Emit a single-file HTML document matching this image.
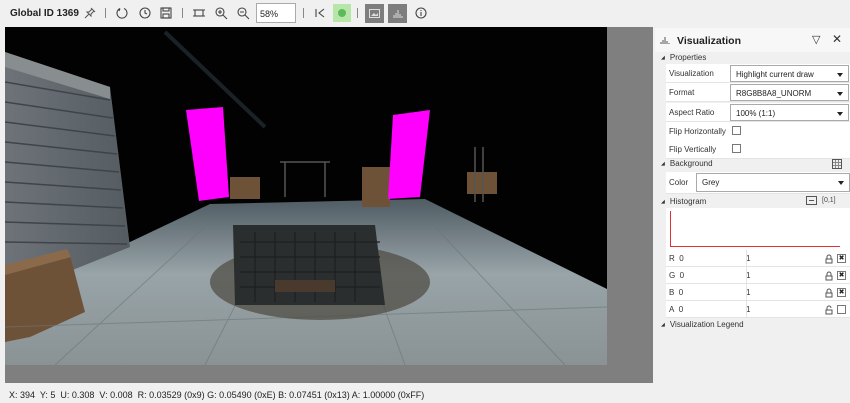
<!DOCTYPE html>
<html><head><style>
*{margin:0;padding:0;box-sizing:border-box}
body{width:850px;height:403px;background:#f0f0f0;font-family:"Liberation Sans",sans-serif;font-size:9px;color:#222;position:relative;overflow:hidden}
.abs{position:absolute}
.tb{top:0;left:0;width:850px;height:26px;background:#f0f0f0}
.ic{position:absolute;top:6px}
.sep{position:absolute;top:8px;width:1px;height:10px;background:#888}
.panel{left:655px;top:28px;width:195px;height:352px;background:#f0f0f0}
.row{position:absolute;left:11px;width:184px;height:19px;background:#fff;border-bottom:1px solid #e4e4e4}
.lbl{position:absolute;left:3px;top:5px;font-size:8px;color:#333}
.sel{position:absolute;border:1px solid #aaa;background:#fff;height:17px;top:1px;font-size:8px;padding:4px 0 0 5px}
.sel:after{content:"";position:absolute;right:5px;top:7px;border-left:3px solid transparent;border-right:3px solid transparent;border-top:4px solid #222}
.sec{position:absolute;left:6px;font-size:8px;color:#333}
.sec:before{content:"◢";font-size:5px;margin-right:5px;vertical-align:1px}
.cb{position:absolute;width:9px;height:9px;border:1px solid #777;background:#fff}
.lk{position:absolute;left:159px;top:4px}
</style></head><body>
<div class="abs tb">
<div class="abs" style="left:10px;top:8px;font-size:10px;font-weight:bold;color:#222">Global ID 1369</div>
<svg class="ic" style="left:83px" width="14" height="14" viewBox="0 0 14 14" fill="none" stroke="#555" stroke-width="1"><path d="M8 2l4 4M9 3L6 6 4 6 8 10 8 8 11 5M6 8l-4 4"/></svg>
<div class="sep" style="left:105px"></div>
<svg class="ic" style="left:115px" width="14" height="14" viewBox="0 0 14 14" fill="none" stroke="#444" stroke-width="1.1"><path d="M5 2.5A5 5 0 1 0 9 2.5M5 2.5L4 5"/></svg>
<svg class="ic" style="left:138px" width="14" height="14" viewBox="0 0 14 14" fill="none" stroke="#444" stroke-width="1.1"><circle cx="7" cy="7" r="5"/><path d="M7 4v3l2 1"/></svg>
<svg class="ic" style="left:159px" width="14" height="14" viewBox="0 0 14 14" fill="none" stroke="#444" stroke-width="1.1"><rect x="2" y="2" width="10" height="10"/><rect x="4" y="2" width="6" height="3"/><rect x="4" y="8" width="6" height="4"/></svg>
<div class="sep" style="left:182px"></div>
<svg class="ic" style="left:192px" width="14" height="14" viewBox="0 0 14 14" fill="none" stroke="#444" stroke-width="1.1"><rect x="3" y="4" width="8" height="6"/><path d="M1 4h2M11 4h2M1 10h2M11 10h2"/></svg>
<svg class="ic" style="left:214px" width="14" height="14" viewBox="0 0 14 14" fill="none" stroke="#444" stroke-width="1.1"><circle cx="6" cy="6" r="4"/><path d="M9 9l4 4M4 6h4M6 4v4"/></svg>
<svg class="ic" style="left:236px" width="14" height="14" viewBox="0 0 14 14" fill="none" stroke="#444" stroke-width="1.1"><circle cx="6" cy="6" r="4"/><path d="M9 9l4 4M4 6h4"/></svg>
<div class="abs" style="left:256px;top:3px;width:40px;height:20px;border:1px solid #aaa;background:#fff;font-size:9px;padding:5px 0 0 3px">58%</div>
<div class="sep" style="left:303px"></div>
<svg class="ic" style="left:313px" width="14" height="14" viewBox="0 0 14 14" fill="none" stroke="#444" stroke-width="1.1"><path d="M3 3v8M11 3L6 7l5 4"/></svg>
<div class="abs" style="left:333px;top:4px;width:18px;height:18px;background:#b8e6a8"></div>
<div class="abs" style="left:338px;top:9px;width:8px;height:8px;border-radius:50%;background:#5bbb5b"></div>
<div class="sep" style="left:357px"></div>
<div class="abs" style="left:365px;top:4px;width:19px;height:19px;background:#7d7d7d"></div>
<svg class="abs" style="left:369px;top:9px" width="11" height="9"><rect x=".5" y=".5" width="10" height="8" fill="none" stroke="#ddd"/><path d="M2 7l3-3 2 2 2-2v3z" fill="#ddd"/></svg>
<div class="abs" style="left:388px;top:4px;width:19px;height:19px;background:#7d7d7d"></div>
<svg class="abs" style="left:392px;top:8px" width="11" height="11"><path d="M2 10V7M4 10V5M6 10V2M8 10V6M10 10V8" stroke="#ddd"/></svg>
<svg class="ic" style="left:414px" width="14" height="14" viewBox="0 0 14 14" fill="none" stroke="#444" stroke-width="1.1"><circle cx="7" cy="7" r="5"/><path d="M7 6v4M7 4v1"/></svg>
</div>

<div class="abs" style="left:5px;top:27px;width:648px;height:356px;background:#7f7f7f"></div>
<svg class="abs" style="left:5px;top:27px" width="602" height="338" viewBox="0 0 602 338">
<defs>
<linearGradient id="fl" x1="0" y1="0" x2="0" y2="1"><stop offset="0" stop-color="#4f5c63"/><stop offset=".45" stop-color="#98a4a8"/><stop offset="1" stop-color="#8a9294"/></linearGradient>
<linearGradient id="wl" x1="0" y1="0" x2="1" y2="0"><stop offset="0" stop-color="#6d7378"/><stop offset="1" stop-color="#555c61"/></linearGradient>
</defs>
<rect width="602" height="338" fill="#020203"/>
<polygon points="0,240 125,215 205,177 420,172 602,262 602,338 0,338" fill="url(#fl)"/>
<polygon points="0,25 105,60 125,220 0,270" fill="url(#wl)"/>
<polygon points="0,25 105,60 105,72 0,40" fill="#888d90"/>
<g stroke="#3e4448" stroke-width="1.5"><path d="M0 55l105 18M0 75l108 16M0 95l110 14M0 115l112 12M0 135l114 10M0 155l116 8M0 175l118 6M0 195l120 4M0 215l122 2"/></g>
<polygon points="0,245 65,228 80,285 25,310 0,315" fill="#6e5238"/>
<polygon points="0,238 62,222 66,230 0,248" fill="#8a6a4a"/>
<g stroke="#6a767a" stroke-width="1" opacity=".6"><path d="M0 300l602-20M50 338L200 200M200 338L270 200M400 338L350 200M560 338L430 200"/></g>
<ellipse cx="315" cy="255" rx="110" ry="38" fill="#4d4840" opacity=".7"/>
<polygon points="228,198 370,198 380,278 230,278" fill="#2b2e2f"/>
<g stroke="#1c1f21" stroke-width="1.2"><path d="M250 205v70M270 205v70M290 205v70M310 205v70M330 205v70M350 205v70M235 215h140M235 230h140M235 245h140M235 260h140"/></g>
<rect x="270" y="253" width="60" height="12" fill="#4a3a2e"/>
<rect x="225" y="150" width="30" height="22" fill="#6e5238"/>
<rect x="357" y="140" width="28" height="40" fill="#6e5238"/>
<rect x="462" y="145" width="30" height="22" fill="#6e5238"/>
<path d="M181 83l37-3 6 90-30 4z" fill="#ff00ff"/>
<path d="M388 88l37-5-10 87-32 2z" fill="#ff00ff"/>
<path d="M160 5l100 95" stroke="#1a2226" stroke-width="4"/>
<path d="M275 135h50M280 135v35M320 135v35" stroke="#555" stroke-width="1.5" fill="none"/>
<path d="M470 120v55M478 120v55" stroke="#555" stroke-width="1.5"/>
</svg>

<div class="abs panel">
<div class="abs" style="left:0;top:0;width:195px;height:24px;background:#f7f7f7"></div>
<svg class="abs" style="left:5px;top:7px" width="10" height="10"><path d="M1 9V7M3 9V5M5 9V2M7 9V6M9 9V8" stroke="#555"/></svg>
<div class="abs" style="left:22px;top:7px;font-size:10.5px;font-weight:bold">Visualization</div>
<div class="abs" style="left:157px;top:5px;font-size:11px;color:#333">▽</div>
<div class="abs" style="left:177px;top:4px;font-size:12px;color:#333">✕</div>
<div class="sec" style="top:25px">Properties</div>
<div class="row" style="top:36px"><div class="lbl">Visualization</div><div class="sel" style="left:64px;width:119px">Highlight current draw</div></div>
<div class="row" style="top:55px"><div class="lbl">Format</div><div class="sel" style="left:64px;width:119px">R8G8B8A8_UNORM</div></div>
<div class="row" style="top:75px"><div class="lbl">Aspect Ratio</div><div class="sel" style="left:64px;width:119px">100% (1:1)</div></div>
<div class="row" style="top:94px"><div class="lbl">Flip Horizontally</div><div class="cb" style="left:66px;top:4px"></div></div>
<div class="row" style="top:112px"><div class="lbl">Flip Vertically</div><div class="cb" style="left:66px;top:4px"></div></div>
<div class="sec" style="top:131px">Background</div>
<svg class="abs" style="left:177px;top:131px" width="10" height="10"><rect x=".5" y=".5" width="9" height="9" fill="none" stroke="#555"/><path d="M3.5 1v8M6.5 1v8M1 3.5h8M1 6.5h8" stroke="#888"/></svg>
<div class="row" style="top:144px;height:22px"><div class="lbl" style="top:6px">Color</div><div class="sel" style="left:30px;width:154px;height:19px;top:1px">Grey</div></div>
<div class="sec" style="top:169px">Histogram</div>
<svg class="abs" style="left:151px;top:168px" width="11" height="9"><rect x=".5" y=".5" width="10" height="8" fill="none" stroke="#555"/><path d="M3 4.5h5" stroke="#555"/></svg>
<div class="abs" style="left:167px;top:169px;font-size:7px;color:#444">[0,1]</div>
<div class="abs" style="left:11px;top:180px;width:184px;height:42px;background:#fff"></div>
<div class="abs" style="left:15px;top:183px;width:1px;height:36px;background:#d33"></div>
<div class="abs" style="left:15px;top:218px;width:170px;height:1px;background:#d33"></div>
<div class="row" style="top:222px;height:17px"><div class="lbl" style="top:4px">R&nbsp;&nbsp;0</div><div class="lbl" style="left:80px;top:4px">1</div><svg class="lk" width="8" height="10"><path d="M2 5V3a2 2 0 0 1 4 0v2M1 5h6v4H1z" fill="none" stroke="#555"/></svg><div class="cb" style="left:171px;top:4px;font-size:7px;line-height:7px;text-align:center">✖</div></div>
<div class="row" style="top:239px;height:17px"><div class="lbl" style="top:4px">G&nbsp;&nbsp;0</div><div class="lbl" style="left:80px;top:4px">1</div><svg class="lk" width="8" height="10"><path d="M2 5V3a2 2 0 0 1 4 0v2M1 5h6v4H1z" fill="none" stroke="#555"/></svg><div class="cb" style="left:171px;top:4px;font-size:7px;line-height:7px;text-align:center">✖</div></div>
<div class="row" style="top:256px;height:17px"><div class="lbl" style="top:4px">B&nbsp;&nbsp;0</div><div class="lbl" style="left:80px;top:4px">1</div><svg class="lk" width="8" height="10"><path d="M2 5V3a2 2 0 0 1 4 0v2M1 5h6v4H1z" fill="none" stroke="#555"/></svg><div class="cb" style="left:171px;top:4px;font-size:7px;line-height:7px;text-align:center">✖</div></div>
<div class="row" style="top:273px;height:17px"><div class="lbl" style="top:4px">A&nbsp;&nbsp;0</div><div class="lbl" style="left:80px;top:4px">1</div><svg class="lk" width="8" height="10"><path d="M2 5V3a2 2 0 0 1 4 0M1 5h6v4H1z" fill="none" stroke="#555"/></svg><div class="cb" style="left:171px;top:4px"></div></div>
<div class="abs" style="left:91px;top:222px;width:1px;height:68px;background:#e4e4e4"></div>
<div class="sec" style="top:292px">Visualization Legend</div>
</div>
<div class="abs" style="left:9px;top:390px;font-size:9px;color:#222">X: 394&nbsp; Y: 5&nbsp; U: 0.308&nbsp; V: 0.008&nbsp; R: 0.03529 (0x9) G: 0.05490 (0xE) B: 0.07451 (0x13) A: 1.00000 (0xFF)</div>
</body></html>
